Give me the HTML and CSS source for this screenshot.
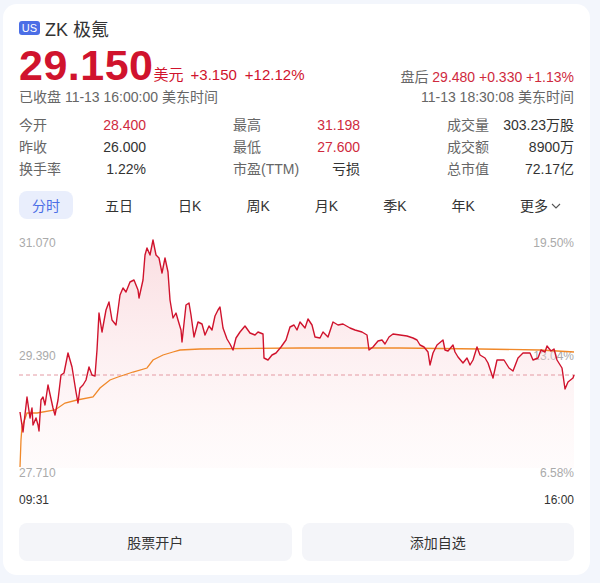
FILE: index.html
```html
<!DOCTYPE html>
<html lang="zh-CN">
<head>
  <meta charset="UTF-8">
  <title>ZK 极氪 行情</title>
  <link rel="stylesheet" href="styles.css">
</head>
<body>
  <div class="card">
    <div class="title">
      <span class="badge">US</span>
      <span class="name">ZK 极氪</span>
    </div>

    <div class="quote">
      <div class="quote-left">
        <div class="price-line">
          <span class="price">29.150</span>
          <span class="unit">美元</span>
          <span class="change">+3.150</span>
          <span class="change">+12.12%</span>
        </div>
        <div class="status">已收盘 11-13 16:00:00 美东时间</div>
      </div>
      <div class="quote-right">
        <div class="after">盘后 <span class="up">29.480 +0.330 +1.13%</span></div>
        <div class="status">11-13 18:30:08 美东时间</div>
      </div>
    </div>

    <div class="stats">
      <div class="stat"><span class="label">今开</span><span class="value up">28.400</span></div>
      <div class="stat"><span class="label">最高</span><span class="value up">31.198</span></div>
      <div class="stat"><span class="label">成交量</span><span class="value">303.23万股</span></div>
      <div class="stat"><span class="label">昨收</span><span class="value">26.000</span></div>
      <div class="stat"><span class="label">最低</span><span class="value up">27.600</span></div>
      <div class="stat"><span class="label">成交额</span><span class="value">8900万</span></div>
      <div class="stat"><span class="label">换手率</span><span class="value">1.22%</span></div>
      <div class="stat"><span class="label">市盈(TTM)</span><span class="value">亏损</span></div>
      <div class="stat"><span class="label">总市值</span><span class="value">72.17亿</span></div>
    </div>

    <div class="tabs">
      <span class="tab active">分时</span>
      <span class="tab">五日</span>
      <span class="tab">日K</span>
      <span class="tab">周K</span>
      <span class="tab">月K</span>
      <span class="tab">季K</span>
      <span class="tab">年K</span>
      <span class="tab">更多<svg class="chevron" width="10" height="6" viewBox="0 0 10 6"><path d="M1 1l4 4 4-4" fill="none" stroke="#555" stroke-width="1.1"/></svg></span>
    </div>

    <div class="chart">
      <span class="axis top left">31.070</span>
      <span class="axis top right">19.50%</span>
      <span class="axis mid left">29.390</span>
      <span class="axis mid right">13.04%</span>
      <span class="axis bottom left">27.710</span>
      <span class="axis bottom right">6.58%</span>
      <svg class="plot" width="556" height="250" viewBox="19 232 556 250">
        <defs>
          <linearGradient id="fill" x1="0" y1="240" x2="0" y2="470" gradientUnits="userSpaceOnUse">
            <stop offset="0" stop-color="#f7c6cc" stop-opacity="0.6"/>
            <stop offset="1" stop-color="#fde8ea" stop-opacity="0.15"/>
          </linearGradient>
        </defs>
        <polygon id="area" fill="url(#fill)" points=""/>
        <line x1="19" y1="375" x2="575" y2="375" stroke="#e49aa3" stroke-width="1" stroke-dasharray="4 3"/>
        <polyline id="avg" fill="none" stroke="#f0892a" stroke-width="1.3" points=""/>
        <polyline id="price" fill="none" stroke="#d0132d" stroke-width="1.4" stroke-linejoin="round" points=""/>
      </svg>
    </div>

    <div class="times">
      <span>09:31</span>
      <span>16:00</span>
    </div>

    <div class="actions">
      <button>股票开户</button>
      <button>添加自选</button>
    </div>
  </div>

  <script>
    const price = [
      [20,412],[23,432],[27,397],[30,418],[32,408],[33,425],[36,418],[38,425],[39,431],[41,400],
      [43,397],[45,405],[48,385],[53,408],[55,415],[58,400],[61,375],[64,373],[68,353],[72,367],
      [76,392],[78,403],[80,388],[83,385],[86,380],[89,367],[92,375],[95,376],[97,350],[99,313],
      [102,332],[106,310],[109,302],[112,320],[116,325],[120,295],[123,288],[126,292],[130,282],[134,280],
      [138,290],[139,298],[143,280],[145,255],[147,248],[150,255],[153,240],[156,255],[159,258],[162,273],
      [165,258],[168,272],[170,300],[173,318],[176,313],[178,320],[181,330],[182,342],[186,305],[189,303],
      [191,315],[194,337],[198,322],[202,324],[205,335],[209,326],[212,330],[215,316],[218,310],[220,307],
      [223,328],[227,339],[230,344],[233,350],[236,338],[240,332],[245,326],[250,333],[255,335],[258,332],
      [263,334],[264,358],[268,360],[272,355],[276,353],[281,347],[286,340],[290,327],[294,325],[297,330],
      [300,322],[305,328],[308,319],[312,325],[315,337],[320,338],[323,332],[328,337],[333,322],[338,325],
      [343,324],[350,328],[355,330],[362,332],[367,335],[369,350],[373,347],[378,341],[382,340],[385,344],
      [389,337],[393,334],[400,335],[407,336],[413,338],[417,340],[420,345],[424,347],[428,352],[430,365],
      [433,353],[437,345],[443,340],[445,350],[448,351],[453,345],[455,352],[458,357],[463,363],[467,358],
      [470,365],[473,360],[477,347],[480,355],[485,358],[488,363],[493,378],[497,360],[504,360],[509,368],
      [513,371],[518,358],[523,353],[530,353],[533,360],[538,358],[541,350],[545,352],[547,346],[551,351],
      [554,349],[557,360],[562,368],[565,389],[568,382],[573,378],[574,375]
    ];
    const avg = [
      [20,467],[21,440],[22,427],[27,413],[37,413],[55,410],[65,403],[77,400],[93,397],[100,388],
      [110,380],[118,377],[133,372],[147,368],[153,360],[163,355],[173,352],[180,350],[200,349],
      [300,348],[400,348],[480,349],[540,350],[574,352]
    ];
    const toPoints = list => list.map(p => p.join(',')).join(' ');

    document.getElementById('price').setAttribute('points', toPoints(price));
    document.getElementById('avg').setAttribute('points', toPoints(avg));
    document.getElementById('area').setAttribute('points',
      toPoints([[20, 468], ...price, [574, 468]]));
  </script>
</body>
</html>
```

FILE: styles.css
```css
body {
  margin: 0;
  background: #f3f6fc;
  font-family: "Liberation Sans", "Noto Sans CJK SC", sans-serif;
  color: #333;
}

.card {
  box-sizing: border-box;
  width: 587px;
  height: 571px;
  margin: 4px 10px 0 3px;
  padding: 14px 16px;
  background: #fff;
  border-radius: 14px;
}

.title {
  display: flex;
  align-items: center;
  gap: 5px;
  height: 20px;
}

.badge {
  width: 21px;
  height: 14px;
  line-height: 14px;
  text-align: center;
  font-size: 11px;
  color: #fff;
  background: #4b6ee6;
  border-radius: 3px;
}

.name {
  font-size: 18px;
  color: #333;
}

.quote {
  display: flex;
  justify-content: space-between;
  align-items: flex-end;
  margin-top: 6px;
}

.price-line {
  display: flex;
  align-items: baseline;
  height: 43px;
}

.price {
  font-size: 43px;
  line-height: 43px;
  font-weight: bold;
  color: #d0132d;
  letter-spacing: 0.5px;
}

.unit {
  font-size: 15px;
  color: #d0132d;
  margin-right: 7px;
}

.change {
  font-size: 15px;
  color: #d0132d;
  margin-right: 8px;
}

.status {
  font-size: 14px;
  line-height: 20px;
  color: #666;
}

.quote-right {
  text-align: right;
}

.after {
  font-size: 14px;
  line-height: 20px;
  color: #666;
}

.up {
  color: #cf2a3e;
}

.stats {
  display: grid;
  grid-template-columns: repeat(3, 127px);
  justify-content: space-between;
  margin-top: 7px;
  font-size: 14px;
  line-height: 22px;
}

.stat {
  display: flex;
  justify-content: space-between;
}

.label {
  color: #666;
}

.value {
  color: #333;
}

.value.up {
  color: #cf2a3e;
}

.tabs {
  display: flex;
  justify-content: space-between;
  margin-top: 11px;
  font-size: 14px;
}

.tab {
  display: flex;
  align-items: center;
  gap: 3px;
  height: 28px;
  padding: 0 13px;
  border-radius: 8px;
  color: #333;
}

.tab.active {
  background: #e9eefc;
  color: #4b6ee6;
}

.chevron {
  margin-top: 1px;
}

.chart {
  position: relative;
  height: 250px;
  margin-top: 13px;
}

.plot {
  position: relative;
  display: block;
  z-index: 1;
}

.axis {
  position: absolute;
  font-size: 12px;
  line-height: 16px;
  color: #aaa;
}

.axis.left { left: 0; }
.axis.right { right: 0; }
.axis.top { top: 3px; }
.axis.mid { top: 116px; }
.axis.bottom { top: 233px; }

.times {
  display: flex;
  justify-content: space-between;
  margin-top: 10px;
  font-size: 12px;
  line-height: 16px;
  color: #333;
}

.actions {
  display: flex;
  gap: 10px;
  margin-top: 15px;
}

.actions button {
  flex: 1;
  height: 38px;
  border: none;
  border-radius: 8px;
  background: #f4f5f9;
  font-family: inherit;
  font-size: 14px;
  color: #333;
}
```
